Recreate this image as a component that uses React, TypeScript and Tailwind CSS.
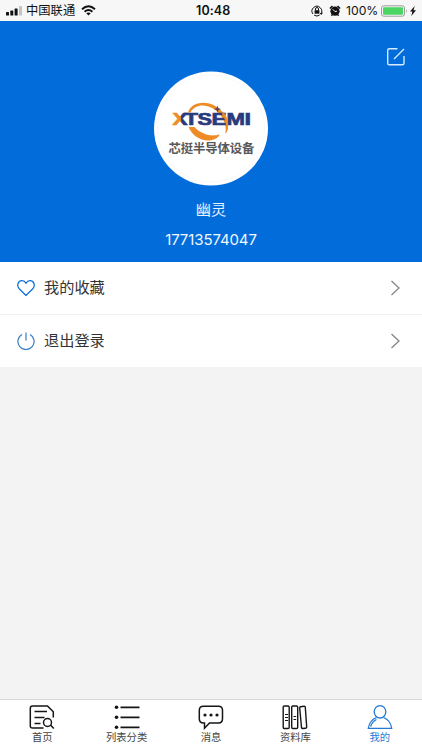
import React from "react";

const BLUE = "#036cdb";

function StatusBar() {
  return (
    <div className="relative flex h-[21px] shrink-0 items-center justify-between bg-[#f7f7f7] text-[#111]">
      <div className="flex items-center pl-[6px]">
        <svg width="17" height="10" viewBox="0 0 17 10">
          <rect x="0" y="6" width="3" height="3.5" rx=".6" fill="#111" />
          <rect x="4.3" y="4.5" width="3" height="5" rx=".6" fill="#111" />
          <rect x="8.6" y="2.5" width="3" height="7" rx=".6" fill="#111" />
          <rect x="13" y="0" width="3" height="9.5" rx=".6" fill="#c4c4c4" />
        </svg>
        <span className="ml-[3px] mt-[1px] text-[12.3px] leading-5">中国联通</span>
        <svg width="15" height="11" viewBox="0 0 15 11" className="ml-[6px]" fill="none" stroke="#111" strokeWidth="2">
          <path d="M1 4.2Q7.5-1.6 14 4.2" />
          <path d="M3.6 6.8Q7.5 3.2 11.4 6.8" />
          <path d="M5.3 8.3Q7.5 6.5 9.7 8.3L7.5 10.5Z" fill="#111" stroke="none" />
        </svg>
      </div>
      <span className="absolute left-[196px] top-[1px] font-['Inter'] text-[12.5px] font-semibold leading-5 tracking-[0.1px]">10:48</span>
      <div className="flex items-center pr-[6px]">
        <svg width="12" height="12" viewBox="0 0 12 12" fill="none" stroke="#111">
          <path d="M2 9A4.8 4.8 0 1 1 9.5 9.2M3.2 10.2Q6 12 8.6 10" />
          <rect x="3.6" y="5.2" width="4.8" height="3.5" fill="#111" stroke="none" />
          <path d="M4.5 5.4V4a1.5 1.5 0 0 1 3 0v1.4" />
          <path d="M9 8l3-.4-1.6 2.5Z" fill="#111" stroke="none" />
        </svg>
        <svg width="12" height="12" viewBox="0 0 12 12" className="ml-[6px]">
          <circle cx="6" cy="6.2" r="4.6" fill="#111" />
          <path d="M.9 3.5 3.5 1M11.1 3.5 8.5 1M3.2 9.8l-.8 1M8.8 9.8l.8 1" stroke="#111" strokeWidth="1.5" />
          <path d="M3.8 4.3 6 6.6 8 6.1" fill="none" stroke="#f7f7f7" />
        </svg>
        <span className="ml-[5px] mt-[1px] w-[32px] whitespace-nowrap font-['Inter'] text-[12.2px] leading-5">100%</span>
        <svg width="27" height="12" viewBox="0 0 27 12" className="ml-[3px]">
          <rect x=".5" y=".8" width="23" height="10.4" rx="2.2" fill="#f7f7f7" stroke="#858585" strokeWidth=".8" />
          <rect x="2" y="2.3" width="20" height="7.4" rx="1" fill="#4cd562" />
          <path d="M25 4Q26.5 6 25 8Z" fill="#888" />
        </svg>
        <svg width="6" height="10" viewBox="0 0 6 10" className="ml-[2px]">
          <path d="M4.7 0 0 5.6h2.4L1.3 10 6 4.2H3.5Z" fill="#111" />
        </svg>
      </div>
    </div>
  );
}

function Logo() {
  return (
    <svg width="114" height="115" viewBox="154 71 114 115">
      <defs>
        <linearGradient id="xFill" x1="0" x2="1">
          <stop offset=".5" stopColor="#ed8d29" />
          <stop offset=".58" stopColor="#293a7c" />
        </linearGradient>
      </defs>
      <circle cx="211" cy="128.5" r="57" fill="#fff" />
      <circle cx="211" cy="128.5" r="53.6" fill="none" stroke="#f5f5f7" strokeWidth=".7" />
      <path d="M188 112.500C190.500 104.500 199 101 209.500 103.500C220 106.500 228.500 116.500 228 127C227.800 130 226.800 132 225.500 133.500C227.300 124.500 222 113.500 213 108.500C204 103.500 194.500 105 190.500 112.500Z" fill="#ef8b24" />
      <path d="M188.500 127C192 136 203 142.500 212 140C217 138.700 219 136.500 219.500 134.300C212.500 137.300 201 134.500 194.500 127Z" fill="#ef8b24" />
      <g fontFamily="'Liberation Sans', sans-serif" fontWeight="700" fontSize="17.2" fill="#293a7c" stroke="#293a7c" strokeWidth=".7">
        <text x="172.500" y="125" textLength="15" lengthAdjust="spacingAndGlyphs" fill="url(#xFill)" stroke="url(#xFill)">X</text>
        <text x="184.500" y="125" textLength="13.500" lengthAdjust="spacingAndGlyphs">T</text>
        <text x="197.500" y="125" textLength="14.500" lengthAdjust="spacingAndGlyphs">S</text>
        <text x="211.500" y="125" textLength="15" lengthAdjust="spacingAndGlyphs">E</text>
        <text x="226.500" y="125" textLength="18.500" lengthAdjust="spacingAndGlyphs">M</text>
        <text x="244.500" y="125" textLength="6.500" lengthAdjust="spacingAndGlyphs">I</text>
      </g>
      <path d="M223 111.500C226.500 115.500 228.500 121 228 127C227.800 130 226.800 132 225.500 133.500C226.800 126.500 226 119.500 222 114Z" fill="#ef8b24" />
      <path d="m217.500 105.500 .9 2.700 2.700.9-2.700.9-.9 2.700-.9-2.700-2.700-.9 2.700-.9Z" fill="#4b4763" />
      <text x="168.500" y="153.300" fontSize="12.400" fontWeight="700" fill="#58585a" fontFamily="'Noto Sans CJK SC', sans-serif" textLength="86">芯挺半导体设备</text>
    </svg>
  );
}

function MenuRow({ label, children, last = false }: { label: string; children: React.ReactNode; last?: boolean }) {
  return (
    <div className={`flex items-center bg-white pl-[17px] pr-[21px] ${last ? "h-[51.500px]" : "h-[53px] border-b border-[#f0f0f0]"}`}>
      {children}
      <span className="ml-[9px] flex-1 text-[15.200px] leading-6 text-[#333]">{label}</span>
      <svg width="11" height="16" viewBox="0 0 11 16" fill="none" stroke="#858585" strokeWidth="1.300">
        <path d="m1.500 1 7.500 7-7.500 7" />
      </svg>
    </div>
  );
}

function Tab({ label, active = false, children }: { label: string; active?: boolean; children: React.ReactNode }) {
  return (
    <div className={`flex flex-1 flex-col items-center pt-[4px] ${active ? "text-[#2479d3]" : "text-[#444]"}`}>
      <svg width="26" height="26" viewBox="0 0 26 26" fill="none" stroke="currentColor" strokeWidth="1.500" className={active ? "" : "text-[#161616]"}>
        {children}
      </svg>
      <span className="text-[10.300px] leading-[15px]">{label}</span>
    </div>
  );
}

export default function App() {
  return (
    <div className="flex h-[750px] w-[422px] flex-col overflow-hidden bg-[#f3f3f3] font-['Liberation_Sans','Noto_Sans_CJK_SC',sans-serif]">
      <StatusBar />
      <header className="relative flex h-[241px] shrink-0 flex-col items-center bg-[#036cdb] pt-[50px] text-white">
        <svg width="20" height="20" viewBox="0 0 20 20" className="absolute left-[386px] top-[26px]" fill="none" stroke="#d5eaff" strokeWidth="1.400">
          <path d="M11.500 1.700H3.200Q1.700 1.700 1.700 3.200V16.300Q1.700 17.800 3.200 17.800H16.500Q18 17.800 18 16.300V9M8 12 18 2" />
        </svg>
        <Logo />
        <div className="mt-[12px] text-[15.200px] leading-6 text-[#e8f3ff]">幽灵</div>
        <div className="mt-[6px] font-['Inter'] text-[15px] leading-6 tracking-[-0.1px] text-[#f1f7ff]">17713574047</div>
      </header>

      <main className="flex-1">
        <MenuRow label="我的收藏">
          <svg width="18" height="18" viewBox="0 0 18 18" fill="none" stroke={BLUE} strokeWidth="1.200">
            <path d="M9 16.500 2.200 9.800C-.8 6.500 1.200 1.600 5 1.600Q7.500 1.600 9 4.200 10.500 1.600 13 1.600C16.800 1.600 18.800 6.500 15.800 9.800Z" />
          </svg>
        </MenuRow>
        <MenuRow label="退出登录" last>
          <svg width="18" height="18" viewBox="0 0 18 18" fill="none" stroke="#377dc5" strokeWidth="1.200">
            <path d="M9 .5V8.500M5 2.400A8.100 8.100 0 1 0 13 2.400" />
          </svg>
        </MenuRow>
      </main>

      <nav className="flex h-[51px] shrink-0 border-t border-[#d8d8d8] bg-white">
        <Tab label="首页">
          <path d="M14.500 24H3.500Q1.300 24 1.300 21.800V4.200Q1.300 2 3.500 2H18.500L24.300 7.800V13.500M5.500 7.500H18M5.500 13.500H15.500M5.500 19.500H11.500M21.500 21 24.800 24.500" />
          <circle cx="18.500" cy="18.500" r="4" />
        </Tab>
        <Tab label="列表分类">
          <path d="M6.500 3.300H25.500M6.500 13.300H25.500M6.500 23.300H25.500" strokeWidth="1.800" />
          <g fill="currentColor" stroke="none">
            <circle cx="2.500" cy="3.300" r="1.800" />
            <circle cx="2.500" cy="13.300" r="1.800" />
            <circle cx="2.500" cy="23.300" r="1.800" />
          </g>
        </Tab>
        <Tab label="消息">
          <path d="M5.500 2.300H20.500Q24.500 2.300 24.500 6.300V14.700Q24.500 18.900 20.500 18.900H11.500L6.500 24.200V18.900H5.500Q1.300 18.900 1.300 14.700V6.300Q1.300 2.300 5.500 2.300Z" />
          <g fill="currentColor" stroke="none">
            <circle cx="7" cy="11" r="1.600" />
            <circle cx="13" cy="11" r="1.600" />
            <circle cx="19" cy="11" r="1.600" />
          </g>
        </Tab>
        <Tab label="资料库">
          <g strokeWidth="1.400">
            <rect x="1.200" y="2" width="6" height="22.500" rx="1.200" />
            <rect x="9.700" y="2" width="6" height="22.500" rx="1.200" />
            <path d="M18.400 2.800 22.200 2.200Q23.200 2.100 23.300 3.200L24.700 23Q24.700 24.100 23.700 24.200L20.700 24.500Q19.700 24.500 19.500 23.500L17.700 4Q17.600 3 18.400 2.800Z" />
            <path d="M3 10.500H6M3 13.500H6M3 16.500H6M11.500 12.500H14.200M11.500 15.500H14.200" strokeWidth="1" />
          </g>
        </Tab>
        <Tab label="我的" active>
          <ellipse cx="13" cy="7.800" rx="5.800" ry="6.200" strokeWidth="1.300" />
          <path d="M9.500 13.500C4.500 15.500 2 19 1.300 24.300H24.700C24 19 21.500 15.500 16.500 13.500M9.500 15.500C6.500 17 4.500 19.500 3.600 22.500" strokeWidth="1.300" />
        </Tab>
      </nav>
    </div>
  );
}
